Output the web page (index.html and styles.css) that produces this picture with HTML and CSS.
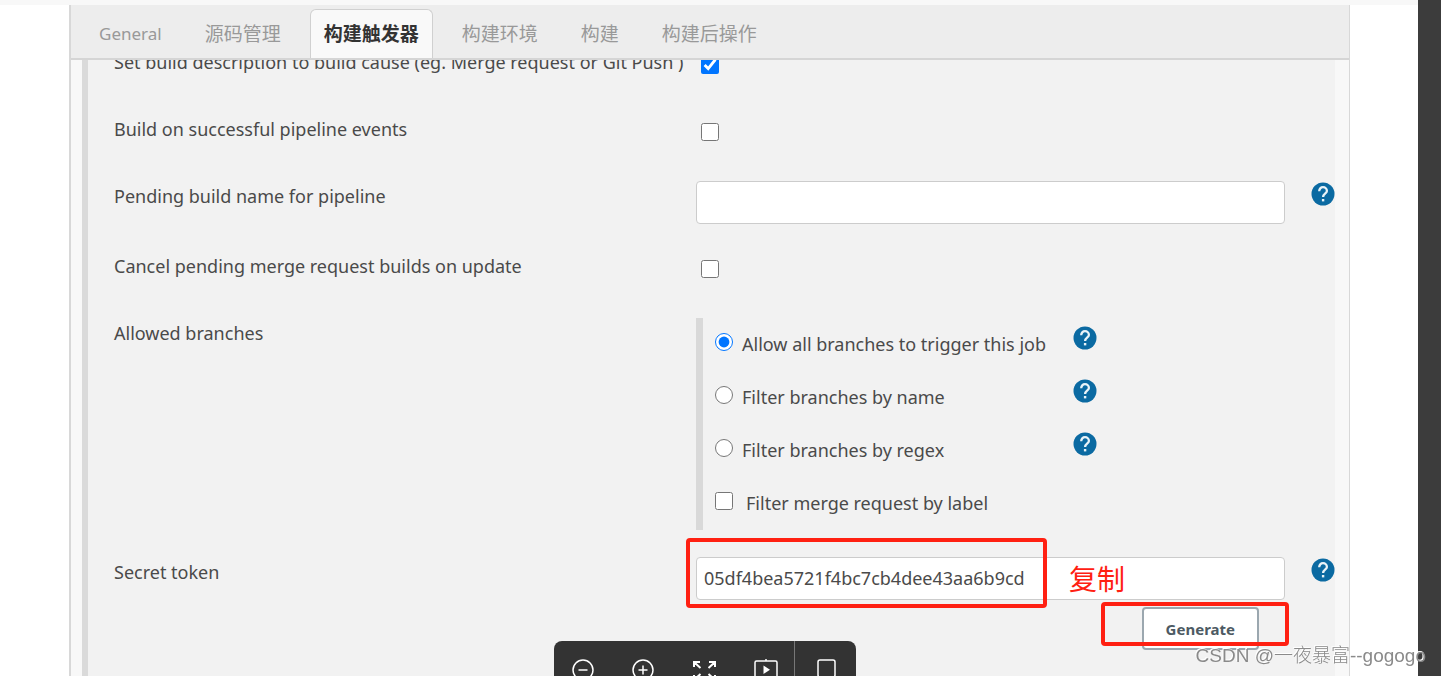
FILE: index.html
```html
<!DOCTYPE html>
<html lang="zh-CN">
<head>
<meta charset="utf-8">
<title>构建触发器</title>
<link rel="stylesheet" href="styles.css">
</head>
<body>
<svg class="symbols" aria-hidden="true">
  <symbol id="help" viewBox="0 0 24 24">
    <circle cx="12" cy="12" r="11.5" fill="#0b6aa2"/>
    <path d="M8.2 9.2C8.2 6.9 9.800 5.200 12 5.200s3.900 1.500 3.900 3.700c0 2.700-3.800 3-3.800 6" fill="none" stroke="#e9f3f8" stroke-width="2.300"/>
    <rect x="10.900" y="17" width="2.400" height="2.400" fill="#e9f3f8"/>
  </symbol>
</svg>
<div class="page">
  <div class="main">
    <div class="panel">
      <nav class="tabs">
        <button class="tab latin">General</button>
        <button class="tab">源码管理</button>
        <button class="tab active">构建触发器</button>
        <button class="tab">构建环境</button>
        <button class="tab">构建</button>
        <button class="tab">构建后操作</button>
      </nav>
      <div class="viewport">
        <form class="form">
          <div class="row">
            <label class="name" for="desc">Set build description to build cause (eg. Merge request or Git Push )</label>
            <div class="control"><input class="check" type="checkbox" id="desc" checked></div>
          </div>
          <div class="row">
            <label class="name" for="events">Build on successful pipeline events</label>
            <div class="control"><input class="check" type="checkbox" id="events"></div>
          </div>
          <div class="row">
            <label class="name" for="pending">Pending build name for pipeline</label>
            <div class="control"><input class="text" type="text" id="pending"></div>
            <button class="help" type="button" aria-label="Help"><svg><use href="#help"/></svg></button>
          </div>
          <div class="row">
            <label class="name" for="cancel">Cancel pending merge request builds on update</label>
            <div class="control"><input class="check" type="checkbox" id="cancel"></div>
          </div>
          <div class="row">
            <span class="name" id="allowed">Allowed branches</span>
            <div class="control">
              <div class="options" role="group" aria-labelledby="allowed">
                <label class="option"><input class="radio" type="radio" name="branch" checked>Allow all branches to trigger this job</label>
                <button class="help" type="button" aria-label="Help"><svg><use href="#help"/></svg></button>
                <label class="option"><input class="radio" type="radio" name="branch">Filter branches by name</label>
                <button class="help" type="button" aria-label="Help"><svg><use href="#help"/></svg></button>
                <label class="option"><input class="radio" type="radio" name="branch">Filter branches by regex</label>
                <button class="help" type="button" aria-label="Help"><svg><use href="#help"/></svg></button>
                <label class="option filter"><input class="box" type="checkbox">Filter merge request by label</label>
              </div>
            </div>
          </div>
          <div class="row">
            <label class="name" for="token">Secret token</label>
            <div class="control">
              <input class="text" type="text" id="token" value="05df4bea5721f4bc7cb4dee43aa6b9cd">
              <span class="mark mark-token"></span>
              <span class="note">复制</span>
              <div class="actions">
                <button class="generate" type="button">Generate</button>
                <span class="mark mark-generate"></span>
              </div>
            </div>
            <button class="help" type="button" aria-label="Help"><svg><use href="#help"/></svg></button>
          </div>
        </form>
      </div>
    </div>
  </div>
  <div class="edge"></div>
</div>
<div class="toolbar">
  <button class="tool" aria-label="Zoom out"><svg viewBox="0 0 28 28"><circle cx="13" cy="14" r="10"/><path d="M8.500 14h9"/></svg></button>
  <button class="tool" aria-label="Zoom in"><svg viewBox="0 0 28 28"><circle cx="13" cy="14" r="10"/><path d="M8.500 14h9M13 9.500v9"/></svg></button>
  <button class="tool" aria-label="Full screen"><svg viewBox="0 0 28 28"><path class="bold" d="M4 11V6h6M4.500 6.500l6 5.500M25 11V6h-6M24.500 6.500l-6 5.500M4 19v5h6M4.500 23.500l6-5.500M25 19v5h-6M24.500 23.500l-6-5.500"/></svg></button>
  <button class="tool" aria-label="Slideshow"><svg viewBox="0 0 28 28"><rect x="5" y="5" width="22" height="17" rx="1.500"/><path d="M16 3v2"/><path class="solid" d="M13.500 9.500l6.500 4.300-6.500 4.200z"/></svg></button>
  <button class="tool split" aria-label="View"><svg viewBox="0 0 28 28"><path d="M9 4h13q2 0 2 2v13q0 2-2 2H9q-2 0-2-2V6q0-2 2-2z"/></svg></button>
</div>
<div class="watermark">CSDN @一夜暴富--gogogo</div>
</body>
</html>
```
FILE: styles.css
```css
* { box-sizing: border-box; }
body {
  margin: 0;
  height: 100vh;
  overflow: hidden;
  background: #fff;
  color: #4a4a4a;
  font: 18px/24px "Noto Sans", "Noto Sans CJK SC", sans-serif;
}
button, input { font: inherit; color: inherit; margin: 0; }
button { padding: 0; border: 0; background: none; }
.symbols { position: absolute; width: 0; height: 0; }
.page { display: flex; height: 100%; }
.main {
  flex: 1;
  min-width: 0;
  display: flex;
  padding: 0 68px 0 69px;
  border-top: 5px solid #f8f8f8;
}
.edge { width: 23px; background: #3c3c3c; }
.panel {
  flex: 1;
  min-width: 0;
  display: flex;
  flex-direction: column;
  border: solid #d8d8d8;
  border-width: 0 1px 0 2px;
  background: #f8f8f8;
}
.tabs {
  display: flex;
  gap: 15px;
  padding: 4px 14px 0;
  background: #ededed;
  border-bottom: 2px solid #d5d5d5;
}
.tab {
  height: 49px;
  padding: 0 13px;
  border: 1px solid transparent;
  border-bottom: 0;
  color: #999;
  font-size: 19px;
}
.latin { font-size: 17px; }
.active {
  border-color: #d0d0d0;
  border-radius: 6px 6px 0 0;
  background: #f9f9f9;
  color: #333;
  font-weight: bold;
}
.viewport {
  flex: 1;
  min-height: 0;
  display: flex;
  overflow: hidden;
  padding: 0 14px 0 11px;
}
.form {
  flex: 1;
  min-width: 0;
  margin-top: -13px;
  padding-left: 26px;
  border-left: 6px solid #dadada;
  background: #f2f2f2;
}
.row {
  display: grid;
  grid-template-columns: minmax(0, 1fr) 48.24% 24px;
  column-gap: 26px;
  align-items: start;
  min-height: 40px;
  margin-bottom: 27px;
}
.name { padding-top: 3px; white-space: nowrap; margin-right: -26px; }
.control { position: relative; }
.check { display: block; width: 18px; height: 18px; margin: 9px 0 0 5px; }
.text {
  display: block;
  width: 100%;
  height: 43px;
  padding: 0 7px 2px;
  border: 1px solid #ccc;
  border-radius: 4px;
  background: #fff;
}
.help { width: 24px; height: 24px; margin-top: 1px; }
.help svg { display: block; width: 24px; height: 24px; }
.options {
  display: grid;
  grid-template-columns: 358px 24px;
  grid-auto-rows: 53px;
  padding-left: 12px;
  border-left: 7px solid #d9d9d9;
}
.options .help { margin-top: 8px; }
.option { display: flex; gap: 9px; padding-top: 14px; white-space: nowrap; }
.filter { gap: 13px; }
.radio, .box { flex: none; width: 18px; height: 18px; margin-top: 1px; }
.actions {
  position: relative;
  display: flex;
  justify-content: flex-end;
  padding: 7px 26px 0 0;
}
.generate {
  height: 43px;
  padding: 0 22px;
  border: 2px solid #9ba7af;
  border-radius: 4px;
  background: #fff;
  color: #4d5a63;
  font-size: 15px;
  font-weight: bold;
}
.mark {
  position: absolute;
  border: 4px solid #ff2012;
  border-radius: 4px;
  pointer-events: none;
}
.mark-token { left: -10px; top: -19px; width: 361px; height: 70px; }
.mark-generate { right: -4px; top: 2px; width: 188px; height: 44px; }
.note {
  position: absolute;
  left: 373px;
  top: 5px;
  color: #ff2012;
  font: 28px/32px "Noto Sans CJK SC", sans-serif;
}
.toolbar {
  position: fixed;
  left: 554px;
  bottom: 0;
  display: flex;
  height: 35px;
  overflow: hidden;
  border-radius: 8px 8px 0 0;
  background: #333;
}
.tool { width: 60px; height: 56px; padding: 15px 16px 13px; }
.tool svg {
  display: block;
  width: 28px;
  height: 28px;
  fill: none;
  stroke: #fff;
  stroke-width: 1.5;
}
.tool .bold { stroke-width: 2; }
.tool .solid { fill: #fff; stroke: none; }
.split { width: 62px; border-left: 1px solid #777; }
.watermark {
  position: fixed;
  right: 15px;
  bottom: 7px;
  color: #8a8a8a;
  font: 300 19px/26px "Liberation Sans", "Noto Sans CJK SC", sans-serif;
  text-shadow: -1px -1px 0 #fff;
}
```
